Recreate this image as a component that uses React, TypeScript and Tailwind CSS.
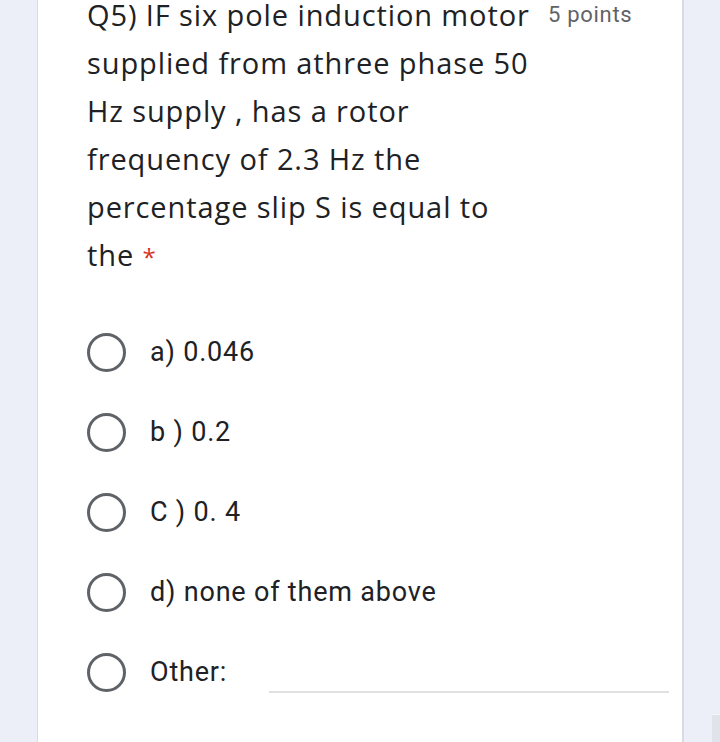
import { useState } from "react";

const options = ["a) 0.046", "b ) 0.2", "C ) 0. 4", "d) none of them above"];

function Radio({ checked }: { checked: boolean }) {
  return (
    <div className="w-[39px] h-[39px] rounded-full border-[3.5px] border-[#5f6368] flex items-center justify-center shrink-0">
      {checked && <div className="w-[19px] h-[19px] rounded-full bg-[#5f6368]" />}
    </div>
  );
}

export default function App() {
  const [picked, setPicked] = useState<number | null>(null);

  return (
    <div className="relative w-[720px] h-[742px] bg-[#eceff7] overflow-hidden flex font-['Roboto',sans-serif]">
      <div className="w-[647px] h-[760px] bg-white border-l border-r-2 border-[#d8dbe2] ml-[37px] pl-[49px] pr-[13px] shrink-0">
        <div className="flex items-start mt-[-9px]">
          <div className="w-[461px] text-[29px] leading-[48px] tracking-[0.9px] text-[#202124] font-['Open_Sans',sans-serif]">
            Q5) IF six pole induction motor
            <br />
            supplied from athree phase 50
            <br />
            Hz supply , has a rotor
            <br />
            frequency of 2.3 Hz the
            <br />
            percentage slip S is equal to
            <br />
            the <span className="text-[#d93025] text-[24px]">*</span>
          </div>
          <div className="text-[22px] leading-[48px] text-[#5f6368] tracking-[0.7px]">5 points</div>
        </div>

        <div className="mt-[31px] flex flex-col">
          {options.map((o, i) => (
            <div
              key={o}
              className="h-[80px] flex items-center gap-[24px] cursor-pointer"
              onClick={() => setPicked(i)}
            >
              <Radio checked={picked === i} />
              <span className="text-[27px] tracking-[0.8px] text-[#202124]">{o}</span>
            </div>
          ))}
          <div className="h-[80px] flex items-center cursor-pointer" onClick={() => setPicked(4)}>
            <Radio checked={picked === 4} />
            <span className="ml-[24px] text-[27px] tracking-[0.8px] text-[#202124] w-[95px]">Other:</span>
            <div className="flex-1 ml-[24px] mt-[40px] h-[2px] bg-[#e0e0e0]" />
          </div>
        </div>
      </div>
      <div className="absolute left-[712px] top-[714px] w-[8px] h-[28px] bg-[#e1e3ea] border-t border-[#f4f5f8]" />
    </div>
  );
}
